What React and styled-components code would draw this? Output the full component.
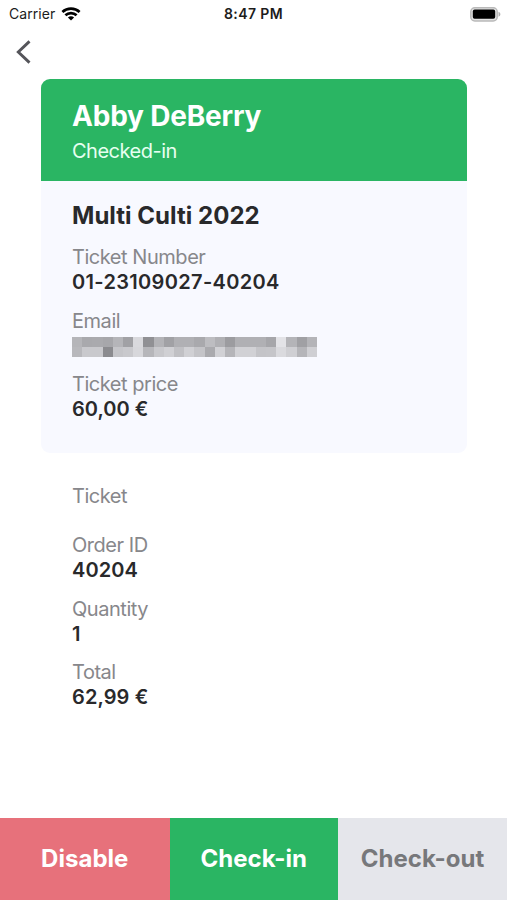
import React from 'react';
import styled, { createGlobalStyle } from 'styled-components';

const GlobalStyle = createGlobalStyle`
  * { box-sizing: border-box; }
  body { margin: 0; background: #fff; font-family: Inter, "Liberation Sans", sans-serif; }
`;

const Screen = styled.div`
  height: 900px;
  display: flex;
  flex-direction: column;
  background: #fff;
  color: #29292b;
`;

const StatusBar = styled.header`
  height: 28px;
  flex: none;
  display: grid;
  grid-template-columns: 1fr auto 1fr;
  align-items: center;
  padding: 0 9px;
  font-size: 14px;
  line-height: 28px;
  color: #1c1c1c;
`;

const Carrier = styled.div`
  display: flex;
  align-items: center;
  gap: 6px;
  letter-spacing: 0.05px;
`;

const Clock = styled.div`
  font-weight: 600;
  letter-spacing: 0.4px;
`;

const BatterySlot = styled.div`
  display: flex;
  justify-content: flex-end;
  margin-right: -3px;
`;

const NavBar = styled.nav`
  height: 51px;
  flex: none;
  padding: 11px 0 0 15px;
`;

const BackButton = styled.button`
  display: block;
  padding: 0;
  border: 0;
  background: none;
  line-height: 0;
`;

const Card = styled.section`
  flex: none;
  margin: 0 40.4px 0 41px;
  height: 374px;
  border-radius: 9px;
  overflow: hidden;
  background: #f8f9ff;
`;

const CardHeader = styled.div`
  height: 102px;
  padding: 19px 31px 0;
  background: #2ab563;
  color: #fff;
`;

const Name = styled.h1`
  margin: 0;
  font-size: 28px;
  line-height: 36px;
  font-weight: 700;
  letter-spacing: -0.2px;
`;

const Status = styled.div`
  font-size: 20px;
  line-height: 35px;
  color: #e6fff0;
  letter-spacing: -0.5px;
`;

const CardBody = styled.div`
  padding: 18px 31px 0;
`;

const EventTitle = styled.h2`
  margin: 0 0 15px;
  font-size: 24px;
  line-height: 33px;
  height: 32px;
  font-weight: 650;
  letter-spacing: 0.03px;
`;

const Field = styled.div`
  height: 63.5px;
`;

const Label = styled.div`
  font-size: 20px;
  line-height: 22px;
  color: #87878b;
  letter-spacing: -0.46px;
`;

const Value = styled.div`
  font-size: 20px;
  line-height: 28px;
  font-weight: 600;
  letter-spacing: ${(p) => p.$tracking || 0}px;
`;

const Mosaic = styled.div`
  display: grid;
  grid-template-columns: repeat(24, 1fr);
  grid-auto-rows: 10px;
  width: 245px;
  margin-top: 5px;
`;

const Tile = styled.span`
  background: ${(p) => p.$shade};
`;

const Order = styled.section`
  flex: 1;
  padding: 32.4px 72px 0;
`;

const OrderHeading = styled(Label)`
  margin-bottom: 27px;
`;

const Actions = styled.footer`
  flex: none;
  height: 82px;
  display: grid;
  grid-template-columns: 169.5px 168.5px 1fr;
`;

const tones = {
  danger: ['#e7717b', '#fff'],
  success: ['#2ab563', '#fff'],
  muted: ['#e5e6eb', '#77787b'],
};

const ActionButton = styled.button`
  border: 0;
  padding: 0;
  background: ${(p) => tones[p.$tone][0]};
  color: ${(p) => tones[p.$tone][1]};
  font: 650 24px/82px Inter, "Liberation Sans", sans-serif;
  letter-spacing: 0.02px;
`;

const shades = [
  'b5 a9 aa a7 b5 a1 d9 90 b3 a1 b0 b0 a9 bd b0 9c b0 b0 b0 a6 e3 b4 a0 b4',
  'b8 c9 c9 8b c5 c9 d7 b6 c8 d0 c0 d0 c4 aa d1 b5 d1 d1 c4 c5 da cf b5 cf',
].join(' ').split(' ').map((v) => `#${v}${v}${(parseInt(v, 16) + 4).toString(16)}`);

function WifiIcon() {
  return (
    <svg width="20" height="14" viewBox="0 0 20 14" fill="none" stroke="#000" strokeWidth="2.7">
      <path d="M1.4 4.9C6.2.6 13.8.6 18.6 4.9" />
      <path d="M4.4 8.2c3.1-2.9 8.1-2.9 11.2 0" />
      <path d="M10 13.5 6.9 10.5c1.7-1.6 4.5-1.6 6.2 0Z" fill="#000" stroke="none" />
    </svg>
  );
}

function BatteryIcon() {
  return (
    <svg width="31" height="15" viewBox="0 0 31 15">
      <rect x="0.8" y="0" width="26.4" height="13.2" rx="4" transform="translate(0 .8)" fill="#e4e4e4" stroke="#b9b9b9" strokeWidth="1.5" />
      <rect x="2.8" y="2.6" width="22.4" height="9.2" rx="1.8" fill="#000" />
      <path d="M28.5 4.8c2.5.9 2.5 4 0 4.9Z" fill="#b0b0b0" />
    </svg>
  );
}

function BackIcon() {
  return (
    <svg width="18" height="26" viewBox="0 0 18 26" fill="none" stroke="#55555a" strokeWidth="2.9">
      <path d="M14.5 2.4 3.3 13l11.2 10.6" />
    </svg>
  );
}

function Detail({ label, value, tracking, children }) {
  return (
    <Field>
      <Label>{label}</Label>
      {children || <Value $tracking={tracking}>{value}</Value>}
    </Field>
  );
}

export default function App() {
  return (
    <Screen>
      <GlobalStyle />
      <StatusBar>
        <Carrier>Carrier <WifiIcon /></Carrier>
        <Clock>8:47 PM</Clock>
        <BatterySlot><BatteryIcon /></BatterySlot>
      </StatusBar>
      <NavBar>
        <BackButton aria-label="Back"><BackIcon /></BackButton>
      </NavBar>
      <Card>
        <CardHeader>
          <Name>Abby DeBerry</Name>
          <Status>Checked-in</Status>
        </CardHeader>
        <CardBody>
          <EventTitle>Multi Culti 2022</EventTitle>
          <Detail label="Ticket Number" value="01-23109027-40204" tracking={0.33} />
          <Detail label="Email">
            <Mosaic>{shades.map((s, i) => <Tile key={i} $shade={s} />)}</Mosaic>
          </Detail>
          <Detail label="Ticket price" value="60,00 €" />
        </CardBody>
      </Card>
      <Order>
        <OrderHeading>Ticket</OrderHeading>
        <Detail label="Order ID" value="40204" tracking={0.1} />
        <Detail label="Quantity" value="1" />
        <Detail label="Total" value="62,99 €" tracking={0.1} />
      </Order>
      <Actions>
        <ActionButton $tone="danger">Disable</ActionButton>
        <ActionButton $tone="success">Check-in</ActionButton>
        <ActionButton $tone="muted">Check-out</ActionButton>
      </Actions>
    </Screen>
  );
}
